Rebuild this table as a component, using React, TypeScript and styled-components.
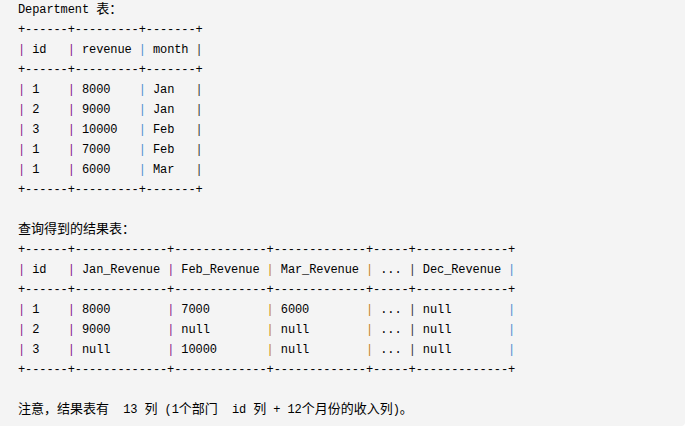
import React from 'react';
import styled, { createGlobalStyle } from 'styled-components';

const Global = createGlobalStyle`
  html, body { margin: 0; padding: 0; background: #ffffff; }
`;

type Tone = 'purple' | 'blue' | 'orange' | 'dark';

const toneColor: Record<Tone, string> = {
  purple: '#86168a',
  blue: '#4a8fd0',
  orange: '#c4841f',
  dark: '#333333',
};

const Block = styled.div`
  width: 685px;
  height: 426px;
  box-sizing: border-box;
  background: #f4f4f4;
  border-radius: 0 0 4px 0;
  padding: 0 18px;
  font-family: "Liberation Mono", "Noto Sans CJK SC", monospace;
  font-size: 12px;
  letter-spacing: -0.1px;
  line-height: 20px;
  color: #000000;
`;

const Line = styled.div`
  height: 20px;
  white-space: pre;
`;

const Han = styled.span`
  font-family: "Noto Sans CJK SC", "Noto Sans", sans-serif;
  font-size: 13px;
  line-height: 13px;
  letter-spacing: 0;
`;

const Gap = styled.span`
  display: inline-block;
  width: 7px;
`;

const Pipe = styled.span<{ $tone: Tone }>`
  color: ${(p) => toneColor[p.$tone]};
`;

const splitRuns = (text: string) => {
  const parts = text.split(/([\u3000-\u303f\u4e00-\u9fff\uff00-\uffef]+)/);
  return parts.map((part, i) =>
    i % 2 === 1 ? <Han key={i}>{part}</Han> : <React.Fragment key={i}>{part}</React.Fragment>
  );
};

const TextLine = ({ text }: { text: string }) => <Line>{splitRuns(text)}</Line>;

interface TableProps {
  widths: number[];
  header: string[];
  rows: string[][];
  tones: Tone[];
}

const AsciiTable = ({ widths, header, rows, tones }: TableProps) => {
  const border = '+' + widths.map((w) => '-'.repeat(w)).join('+') + '+';
  const renderRow = (cells: string[], key: string) => (
    <Line key={key}>
      {cells.map((c, i) => (
        <React.Fragment key={i}>
          <Pipe $tone={tones[i]}>|</Pipe>
          {(' ' + c).padEnd(widths[i])}
        </React.Fragment>
      ))}
      <Pipe $tone={tones[widths.length]}>|</Pipe>
    </Line>
  );
  return (
    <>
      <Line>{border}</Line>
      {renderRow(header, 'h')}
      <Line>{border}</Line>
      {rows.map((r, i) => renderRow(r, 'r' + i))}
      <Line>{border}</Line>
    </>
  );
};

const deptRows = [
  ['1', '8000', 'Jan'],
  ['2', '9000', 'Jan'],
  ['3', '10000', 'Feb'],
  ['1', '7000', 'Feb'],
  ['1', '6000', 'Mar'],
];

const resultRows = [
  ['1', '8000', '7000', '6000', '...', 'null'],
  ['2', '9000', 'null', 'null', '...', 'null'],
  ['3', 'null', '10000', 'null', '...', 'null'],
];

export default function App() {
  return (
    <>
      <Global />
      <Block>
        <TextLine text="Department 表：" />
        <AsciiTable
          widths={[6, 9, 7]}
          header={['id', 'revenue', 'month']}
          rows={deptRows}
          tones={['purple', 'purple', 'blue', 'dark']}
        />
        <Line />
        <TextLine text="查询得到的结果表：" />
        <AsciiTable
          widths={[6, 13, 13, 13, 5, 13]}
          header={['id', 'Jan_Revenue', 'Feb_Revenue', 'Mar_Revenue', '...', 'Dec_Revenue']}
          rows={resultRows}
          tones={['purple', 'purple', 'purple', 'orange', 'orange', 'dark', 'blue']}
        />
        <Line />
        <Line>
          <Han>注意，结果表有</Han> <Gap />13 <Han>列</Han> (1<Han>个部门</Han> <Gap />id <Han>列</Han> + 12
          <Han>个月份的收入列</Han>)<Han>。</Han>
        </Line>
      </Block>
    </>
  );
}
